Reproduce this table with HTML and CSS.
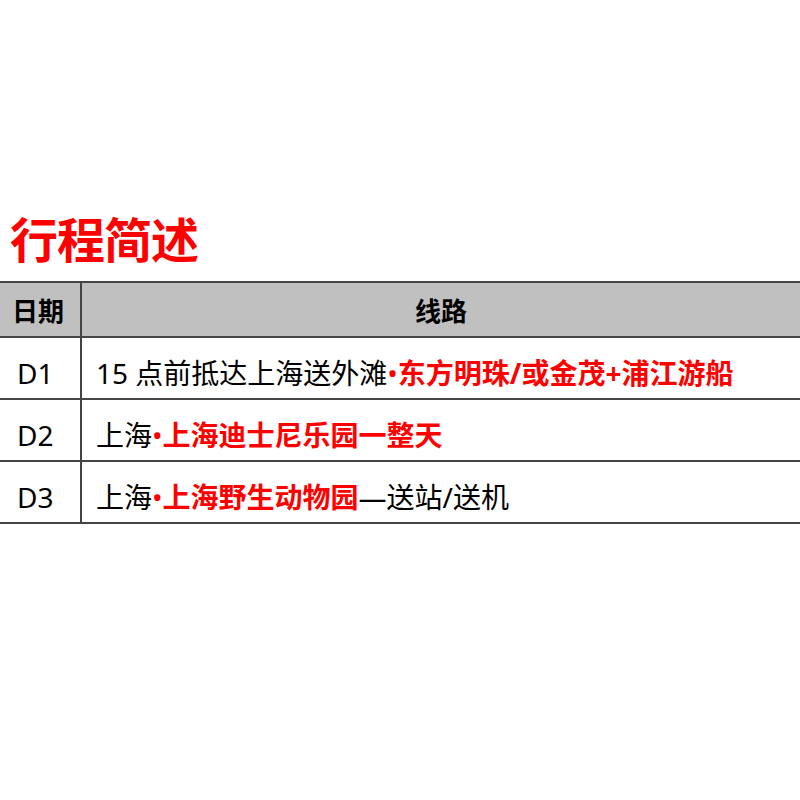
FILE: index.html
```html
<!DOCTYPE html>
<html lang="zh-CN">
<head>
<meta charset="utf-8">
<title>行程简述</title>
<link rel="stylesheet" href="styles.css">
</head>
<body>
<main class="page">
  <h1 class="title">行程简述</h1>
  <div class="itinerary">
    <div class="cell head day">日期</div>
    <div class="cell head route">线路</div>

    <div class="cell day">D1</div>
    <div class="cell route">15 点前抵达上海送外滩<span class="red">•</span><b class="red">东方明珠/或金茂+浦江游船</b></div>

    <div class="cell day">D2</div>
    <div class="cell route">上海<span class="red">•</span><b class="red">上海迪士尼乐园一整天</b></div>

    <div class="cell day">D3</div>
    <div class="cell route">上海<span class="red">•</span><b class="red">上海野生动物园</b>—送站/送机</div>
  </div>
</main>
</body>
</html>
```

FILE: styles.css
```css
html, body {
  margin: 0;
  padding: 0;
  background: #ffffff;
}

body {
  font-family: "Noto Sans", "Noto Sans CJK SC", sans-serif;
  color: #000000;
}

.page {
  padding-top: 216px;
}

.title {
  margin: 0 0 17px 10px;
  font-size: 48px;
  line-height: 48px;
  font-weight: 700;
  color: #ff0000;
  letter-spacing: -1px;
}

.itinerary {
  display: grid;
  grid-template-columns: 82px 1fr;
  border-top: 2px solid #444444;
}

.cell {
  box-sizing: border-box;
  height: 62px;
  display: flex;
  align-items: flex-end;
  padding-bottom: 10px;
  border-bottom: 2px solid #444444;
  font-size: 28px;
  line-height: 30px;
  white-space: nowrap;
}

.cell.head {
  height: 55px;
  background: #c0c0c0;
  font-weight: 700;
  font-size: 26px;
  padding-bottom: 10px;
}

.day {
  border-right: 2px solid #444444;
  padding-left: 17px;
}

.head.day {
  padding-left: 12px;
}

.route {
  padding-left: 14px;
}

.head.route {
  justify-content: center;
  padding-left: 0;
}

.red {
  color: #ff0000;
}

b.red {
  font-weight: 700;
}
```
